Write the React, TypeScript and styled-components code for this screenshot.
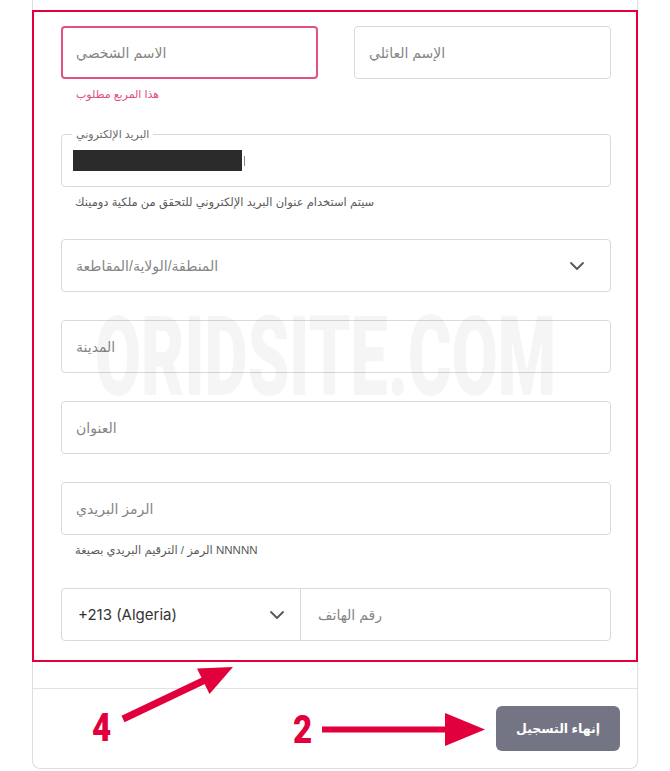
import styled, { createGlobalStyle } from "styled-components";
import { ChevronDown } from "lucide-react";

const GlobalStyle = createGlobalStyle`
  body {
    margin: 0;
    background: #fff;
    font-family: "Liberation Sans", "DejaVu Sans", sans-serif;
  }
`;

const Page = styled.div`
  position: relative;
  width: 670px;
  height: 771px;
  overflow: hidden;
`;

const Card = styled.div`
  box-sizing: border-box;
  width: 606px;
  margin-left: 32px;
  padding-top: 10px;
  border: 1px solid #dedede;
  border-top: none;
  border-radius: 0 0 8px 8px;
`;

// red frame drawn around the form block
const Highlight = styled.section`
  margin: 0 -1px 26px;
  padding: 14px 25px 19px 27px;
  border: 2px solid #e1003c;
  display: flex;
  flex-direction: column;
`;

const NameRow = styled.div`
  display: grid;
  grid-template-columns: 1fr 1fr;
  column-gap: 36px;
  align-items: start;
`;

const Column = styled.div`
  display: flex;
  flex-direction: column;
`;

const Field = styled.div<{ $error?: boolean; $mt?: number }>`
  position: relative;
  box-sizing: border-box;
  height: 53px;
  margin-top: ${(p) => p.$mt ?? 0}px;
  display: flex;
  align-items: center;
  justify-content: space-between;
  padding: 0 ${(p) => (p.$error ? 13 : 14)}px;
  border: ${(p) => (p.$error ? "2px solid #e2527d" : "1px solid #d9d9d9")};
  border-radius: 4px;
  background: #fff;
`;

const TextInput = styled.input`
  flex: 1;
  min-width: 0;
  border: none;
  outline: none;
  padding: 0;
  background: transparent;
  font: 14px "Liberation Sans", "DejaVu Sans", sans-serif;
  color: #333;

  &::placeholder {
    color: #858585;
  }
`;

const Placeholder = styled.span`
  font-size: 14px;
  color: #858585;
`;

const ErrorText = styled.div`
  margin-top: 7px;
  padding-left: 15px;
  font-size: 11px;
  line-height: 16px;
  color: #e0507a;
`;

const HelperText = styled.div`
  margin-top: 8px;
  padding-left: 14px;
  font-size: 11.5px;
  line-height: 14px;
  color: #5a5a5a;
`;

const FloatLabel = styled.span`
  position: absolute;
  top: -8px;
  left: 10px;
  padding: 0 4px;
  background: #fff;
  font-size: 11px;
  line-height: 14px;
  color: #6a6a6a;
`;

const Redacted = styled.span`
  display: block;
  width: 169px;
  height: 21px;
  margin-left: -3px;
  background: #2b2b2b;
`;

const Caret = styled.span`
  display: block;
  width: 1px;
  height: 10px;
  margin-left: 2px;
  background: #888;
`;

const EmailValue = styled.div`
  flex: 1;
  display: flex;
  align-items: center;
`;

const SelectChevron = styled(ChevronDown)`
  flex: none;
  color: #555;
  margin-right: 7px;
`;

const PhoneRow = styled.div`
  box-sizing: border-box;
  height: 53px;
  margin-top: 31px;
  display: flex;
  border: 1px solid #d9d9d9;
  border-radius: 4px;
`;

const CountrySelect = styled.div`
  box-sizing: border-box;
  width: 239px;
  display: flex;
  align-items: center;
  justify-content: space-between;
  padding: 0 4px 0 16px;
  border-right: 1px solid #d9d9d9;
  font: 15px Inter, "Liberation Sans", sans-serif;
  color: #333;
`;

const PhoneInput = styled(TextInput)`
  padding-left: 17px;
`;

const Footer = styled.div`
  display: flex;
  justify-content: flex-end;
  padding: 17px 17px;
  border-top: 1px solid #e3e3e3;
`;

const SubmitButton = styled.button`
  width: 124px;
  height: 45px;
  border: none;
  border-radius: 6px;
  background: #737584;
  color: #fff;
  font: bold 12.5px "Liberation Sans", "DejaVu Sans", sans-serif;
`;

const Watermark = styled.div`
  position: absolute;
  left: 95px;
  top: 302px;
  font: 900 111px/1 Roboto, sans-serif;
  color: #000;
  opacity: 0.035;
  transform: scaleX(0.6);
  transform-origin: left top;
  white-space: nowrap;
  pointer-events: none;
`;

const Arrows = styled.svg`
  position: absolute;
  left: 0;
  top: 0;
  pointer-events: none;
`;

const StepNumber = styled.span<{ $x: number; $y: number }>`
  position: absolute;
  left: ${(p) => p.$x}px;
  top: ${(p) => p.$y}px;
  font: 900 39px/1 Roboto, sans-serif;
  color: #e1003c;
  transform: scaleX(0.85);
  transform-origin: left top;
`;

export default function App() {
  return (
    <Page>
      <GlobalStyle />
      <Card>
        <Highlight>
          <NameRow>
            <Column>
              <Field $error>
                <TextInput placeholder="الاسم الشخصي" />
              </Field>
              <ErrorText>هذا المربع مطلوب</ErrorText>
            </Column>
            <Field>
              <TextInput placeholder="الإسم العائلي" />
            </Field>
          </NameRow>

          <Field $mt={32}>
            <FloatLabel>البريد الإلكتروني</FloatLabel>
            <EmailValue>
              <Redacted />
              <Caret />
            </EmailValue>
          </Field>
          <HelperText>سيتم استخدام عنوان البريد الإلكتروني للتحقق من ملكية دومينك</HelperText>

          <Field $mt={30}>
            <Placeholder>المنطقة/الولاية/المقاطعة</Placeholder>
            <SelectChevron size={24} strokeWidth={1.8} />
          </Field>

          <Field $mt={28}>
            <TextInput placeholder="المدينة" />
          </Field>

          <Field $mt={28}>
            <TextInput placeholder="العنوان" />
          </Field>

          <Field $mt={28}>
            <TextInput placeholder="الرمز البريدي" />
          </Field>
          <HelperText>الرمز / الترقيم البريدي بصيغة NNNNN</HelperText>

          <PhoneRow>
            <CountrySelect>
              <span>+213 (Algeria)</span>
              <SelectChevron size={24} strokeWidth={1.8} />
            </CountrySelect>
            <PhoneInput placeholder="رقم الهاتف" />
          </PhoneRow>
        </Highlight>

        <Footer>
          <SubmitButton>إنهاء التسجيل</SubmitButton>
        </Footer>
      </Card>

      <Watermark>ORIDSITE.COM</Watermark>

      <Arrows width="670" height="771" viewBox="0 0 670 771">
        <line x1="123" y1="719" x2="205" y2="680" stroke="#e1003c" strokeWidth="7" />
        <polygon points="233,667 197,668.5 209.5,694" fill="#e1003c" />
        <line x1="322" y1="729.5" x2="448" y2="729.5" stroke="#e1003c" strokeWidth="6" />
        <polygon points="485,729.5 445,713 445,746" fill="#e1003c" />
      </Arrows>
      <StepNumber $x={92} $y={709}>4</StepNumber>
      <StepNumber $x={293} $y={711}>2</StepNumber>
    </Page>
  );
}
